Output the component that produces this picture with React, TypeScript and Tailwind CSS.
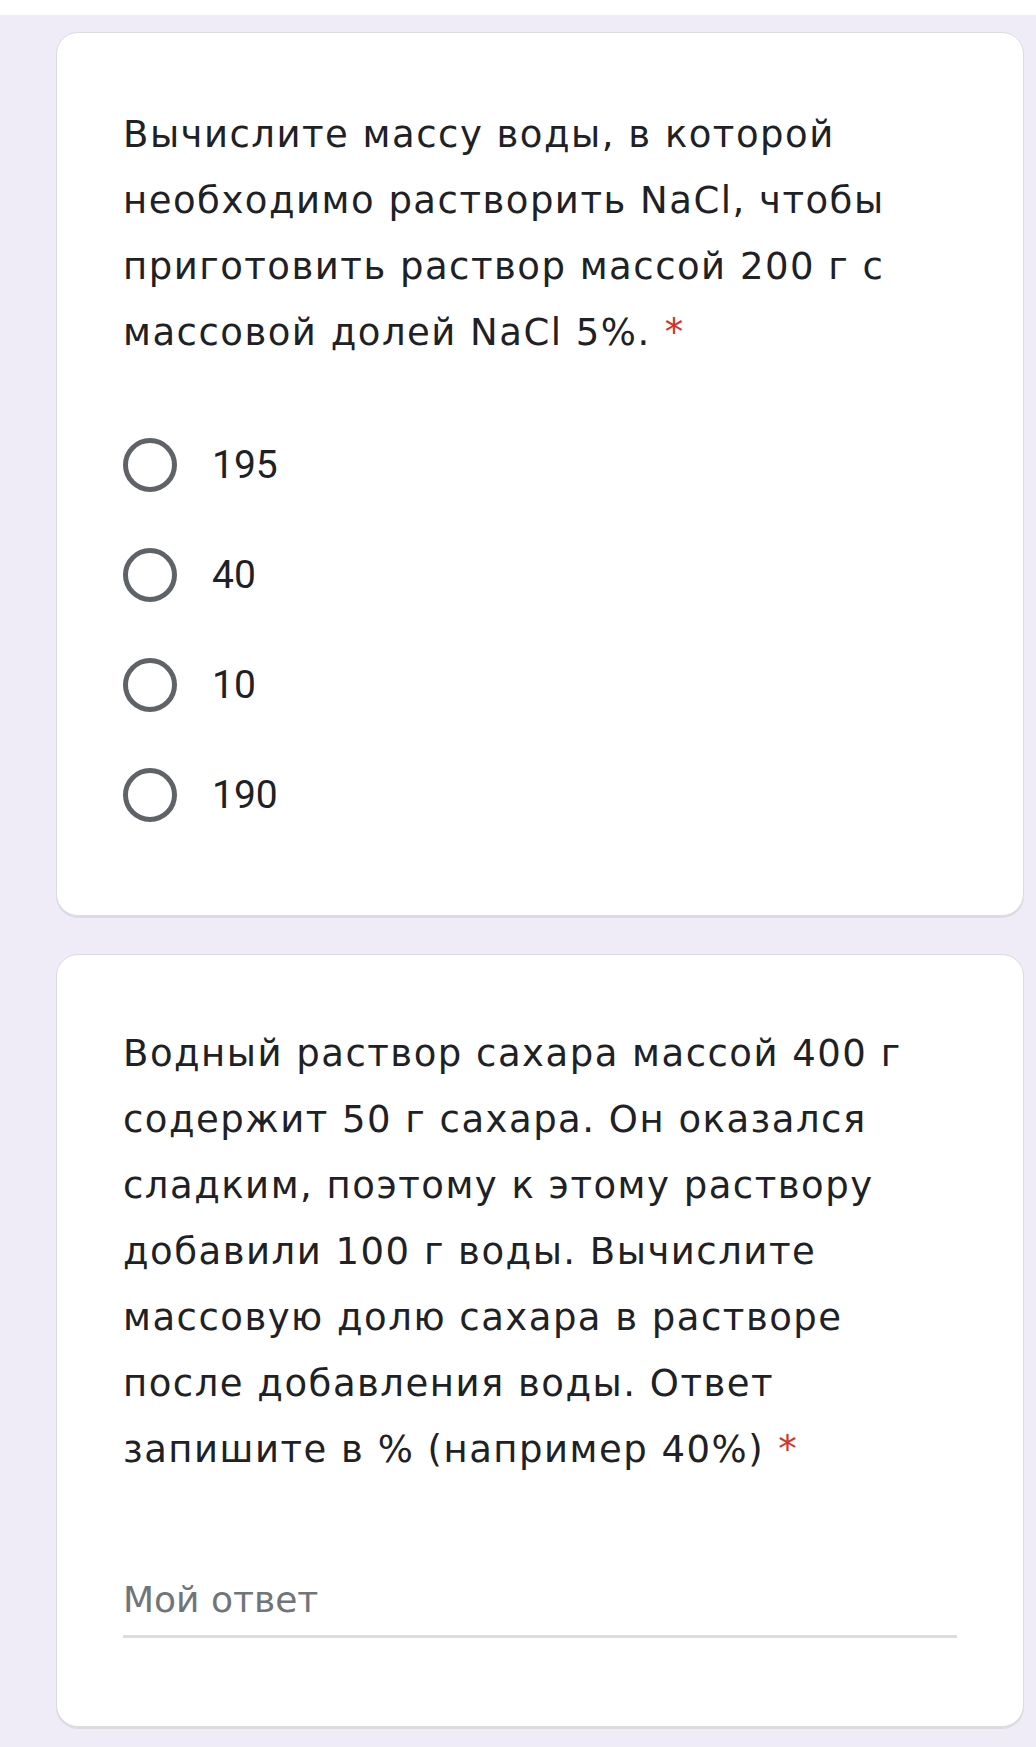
import React from "react";

const options = ["195", "40", "10", "190"];

const q1 = [
  "Вычислите массу воды, в которой",
  "необходимо растворить NaCl, чтобы",
  "приготовить раствор массой 200 г с",
  "массовой долей NaCl 5%.",
];

const q2 = [
  "Водный раствор сахара массой 400 г",
  "содержит 50 г сахара. Он оказался",
  "сладким, поэтому к этому раствору",
  "добавили 100 г воды. Вычислите",
  "массовую долю сахара в растворе",
  "после добавления воды. Ответ",
  "запишите в % (например 40%)",
];

function Question({ lines }: { lines: string[] }) {
  return (
    <div className="text-[37px] leading-[66px] tracking-[1.5px] text-[#202124] whitespace-nowrap">
      {lines.map((l, i) => (
        <div key={i}>
          {l}
          {i === lines.length - 1 && <span className="ml-[14px] text-[#d93025]">*</span>}
        </div>
      ))}
    </div>
  );
}

function Radio({ label }: { label: string }) {
  return (
    <label className="flex h-[110px] items-center">
      <span className="block h-[54px] w-[54px] shrink-0 rounded-full border-[5px] border-[#5f6368]" />
      <span className="ml-[35px] font-['Roboto',sans-serif] text-[39px] text-[#202124]">{label}</span>
    </label>
  );
}

export default function App() {
  return (
    <div className="min-h-[1747px] bg-[#efebf7] font-['DejaVu_Sans',sans-serif]">
      <div className="h-[15px] bg-white" />
      <div className="pl-[56px] pr-[12px] pt-[17px] pb-[24px] flex flex-col gap-[38px]">
        {/* Question 1 */}
        <div className="rounded-[22px] border-[1.5px] border-[#dadce0] bg-white pl-[66px] pr-[66px] pt-[69px] pb-[65px] shadow-[0_2px_0_#dcdce0]">
          <Question lines={q1} />
          <div className="mt-[44px] flex flex-col">
            {options.map((o) => (
              <Radio key={o} label={o} />
            ))}
          </div>
        </div>

        {/* Question 2 */}
        <div className="rounded-[22px] border-[1.5px] border-[#dadce0] bg-white pl-[66px] pr-[66px] pt-[66px] pb-[88px] shadow-[0_2px_0_#dcdce0]">
          <Question lines={q2} />
          <div className="mt-[96px] border-b-[3px] border-[#dadce0] pb-[14px]">
            <span className="text-[36px] leading-[42px] text-[#70757a]">Мой ответ</span>
          </div>
        </div>
      </div>
    </div>
  );
}
